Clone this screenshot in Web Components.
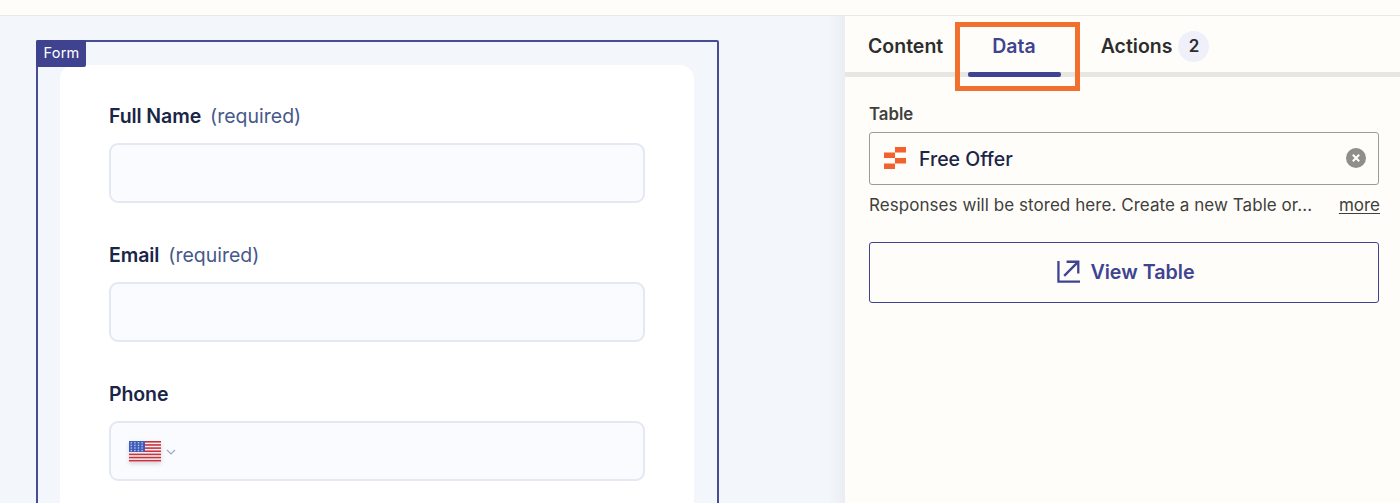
<!DOCTYPE html>
<html lang="en"><head><meta charset="utf-8">
<style>
html,body{margin:0;padding:0;height:503px;overflow:hidden;font-family:Inter,"Liberation Sans",sans-serif;background:#fffdf9}
app-shell{height:503px}
</style></head><body>
<app-shell>
  <form-canvas slot="canvas">
    <form-frame>
      <form-field label="Full Name" hint="(required)"></form-field>
      <form-field label="Email" hint="(required)"></form-field>
      <form-field label="Phone" phone></form-field>
    </form-frame>
  </form-canvas>
  <side-panel slot="panel"></side-panel>
</app-shell>
<script>
function def(name, html, init){
  customElements.define(name, class extends HTMLElement{
    constructor(){super();this.attachShadow({mode:'open'}).innerHTML=html;}
    connectedCallback(){ if(init) init(this,this.shadowRoot); }
  });
}
def('app-shell',`<style>
:host{display:flex;flex-direction:column;width:1400px;overflow:hidden}
.top{height:15px;flex:none;background:#fffdf9;border-bottom:1px solid #e9e8e6}
.main{flex:1;display:flex;min-height:0}
</style><div class="top"></div><div class="main"><slot name="canvas"></slot><slot name="panel"></slot></div>`);

def('form-canvas',`<style>
:host{display:block;width:845px;flex:none;box-sizing:border-box;background:linear-gradient(90deg,#f3f6fb 0,#f3f6fb 98%,#eaedf1 100%);padding:24px 126px 0 36px;overflow:hidden}
</style><slot></slot>`);

def('form-frame',`<style>
:host{display:block;position:relative;box-sizing:border-box;width:683px;height:600px;border:2px solid #484c95;border-radius:2px;padding:23px 23px 0 22px}
.tag{position:absolute;left:-2px;top:-2px;width:50px;height:27px;box-sizing:border-box;padding-left:1px;background:#3f438f;color:#fff;font-size:14.500px;line-height:26px;text-align:center;border-radius:2px;letter-spacing:.25px}
.card{background:#fff;border-radius:14px;padding:40px 49px 0;height:600px;display:flex;flex-direction:column;gap:41px}
</style><div class="tag">Form</div><div class="card"><slot></slot></div>`);

def('form-field',`<style>
:host{display:block;color:#1a2547}
.l{display:flex;gap:9px;align-items:baseline;line-height:24px;font-weight:600;position:relative;top:-1px;height:24px;margin-bottom:14px;font-size:19.500px;letter-spacing:-.1px}
.h{font-weight:400;color:#47598a;letter-spacing:0}
.box{height:60px;box-sizing:border-box;border:2px solid #e4e8f2;border-radius:9px;background:#fafbfe;display:flex;align-items:center;padding-left:18px;gap:5px}
svg{display:block}
.flag{filter:drop-shadow(0 2px 2px rgba(30,30,60,.16))}
</style>
<div class="l"><span class="n"></span><span class="h"></span></div>
<div class="box"></div>`,(el,s)=>{
  s.querySelector('.n').textContent=el.getAttribute('label');
  s.querySelector('.h').textContent=el.getAttribute('hint')||'';
  if(el.hasAttribute('phone')){
    let st='';
    for(let i=0;i<7;i++){ st+=`<rect x="0" y="${i*3.15}" width="32" height="1.6" fill="#c9333f"/>`; }
    let dots='';
    for(let r=0;r<4;r++)for(let c=0;c<4;c++){dots+=`<rect x="${1.6+c*3.6}" y="${1.1+r*2.6}" width="1.4" height="1.4" fill="#b9c6ee"/>`;}
    s.querySelector('.box').innerHTML=`<svg class="flag" width="32" height="21" viewBox="0 0 32 21"><rect width="32" height="21" fill="#f6f2f2"/>${st}<rect width="16" height="11" fill="#3f5cb8"/>${dots}</svg>
    <svg width="10" height="6" viewBox="0 0 10 6" style="margin-top:2px"><path d="M1 1l4 4 4-4" fill="none" stroke="#a3a8bd" stroke-width="1.2"/></svg>`;
  }
});

def('tab-item',`<style>
:host{display:flex;align-items:center;gap:6px;height:100%;font-size:19.500px;font-weight:600;color:#2d2d2d;position:relative;box-sizing:border-box;padding-top:4px}
:host([active]){color:#3f4492}
:host([active])::after{content:"";position:absolute;left:-24px;right:-25px;top:56px;height:5px;border-radius:2px;background:#3f4492}
</style><slot></slot>`);

def('tab-badge',`<style>
:host{display:flex;width:31px;height:31px;border-radius:50%;background:#eff0fa;align-items:center;justify-content:center;font-size:17px;font-weight:600;color:#2d2d2d}
</style><slot></slot>`);

def('side-panel',`<style>
:host{display:block;flex:1;position:relative;background:#fffdf9;color:#2d2d2d}
.tabs{height:56px;display:flex;padding:0 0 0 23px;border-bottom:5px solid #e7e6e2;box-sizing:content-box}
.tabs tab-item:nth-child(2){margin-left:49px}
.tabs tab-item:nth-child(3){margin-left:65px}
.body{padding:25px 21px 0 24px}
.lab{font-size:16.800px;line-height:22px;font-weight:600;color:#403f3d;margin-bottom:7px;margin-top:1px}
.sel{height:53px;box-sizing:border-box;border:1px solid #9c9b97;border-radius:3px;display:flex;align-items:center;padding:1px 12px 0 14px;font-size:19.500px;font-weight:500;color:#1a2547;gap:12px}
.sel .t{flex:1}
.sel svg{margin-top:-2px}
.help{display:flex;justify-content:space-between;font-size:17px;line-height:22px;color:#403f3d;margin-top:9px;margin-right:-1px;letter-spacing:.055px}
.help u{text-underline-offset:2px;letter-spacing:0}
.btn{margin-top:26px;height:61px;box-sizing:border-box;border:1px solid #3f4492;border-radius:3px;display:flex;align-items:center;justify-content:center;gap:10px;color:#3f4492;font-size:19.700px;font-weight:600;padding:0 0 2px 4px}
svg{display:block;flex:none}
.mark{position:absolute;left:110px;top:6px;width:125px;height:69px;box-sizing:border-box;border:5px solid #f2702e;pointer-events:none}
</style>
<div class="tabs">
  <tab-item>Content</tab-item>
  <tab-item active>Data</tab-item>
  <tab-item>Actions<tab-badge>2</tab-badge></tab-item>
</div>
<div class="body">
  <div class="lab">Table</div>
  <div class="sel">
    <svg width="23" height="23" viewBox="0 0 23 23"><g fill="#f2622c"><rect x="11" y="0" width="11" height="5.500"/><rect x="0" y="5.500" width="11" height="5.500"/><rect x="11" y="11" width="11" height="5.500"/><rect x="0" y="16.500" width="11" height="5.500"/></g></svg>
    <span class="t">Free Offer</span>
    <svg width="20" height="20" viewBox="0 0 20 20"><circle cx="10" cy="10" r="10" fill="#8f8e8a"/><path d="M6.800 6.800l6.400 6.400M13.200 6.800l-6.400 6.400" stroke="#fff" stroke-width="2"/></svg>
  </div>
  <div class="help"><span>Responses will be stored here. Create a new Table or...</span><u>more</u></div>
  <div class="btn">
    <svg width="23" height="23" viewBox="0 0 24 24" fill="none" stroke="#3f4492" stroke-width="2.400"><path d="M1.500 1v21.500H24"/><path d="M7.500 16.500L22 2"/><path d="M10 1.800h12.200V14"/></svg>
    <span>View Table</span>
  </div>
</div>
<div class="mark"></div>`);
</script>
</body></html>
